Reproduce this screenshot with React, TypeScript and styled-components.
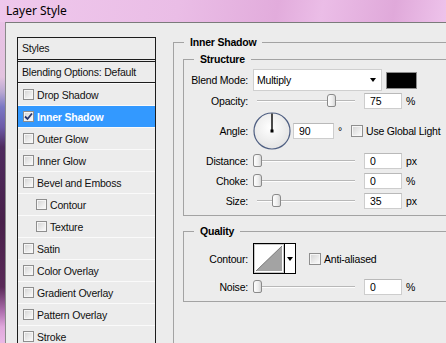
import React from 'react';
import styled, { createGlobalStyle } from 'styled-components';

const GlobalStyle = createGlobalStyle`
  html, body { margin: 0; padding: 0; background: #ececec; }
  body { font-family: "Liberation Sans", Arial, sans-serif; }
`;

const Screen = styled.div`
  width: 446px;
  height: 343px;
  overflow: hidden;
  display: flex;
  flex-direction: column;
  font-family: "Liberation Sans", Arial, sans-serif;
  font-size: 10.5px;
  letter-spacing: -0.2px;
  color: #000;
`;

const TitleBar = styled.div`
  height: 22px;
  flex: none;
  box-sizing: border-box;
  padding: 3px 0 0 6px;
  font-family: "Noto Sans", "Liberation Sans", sans-serif;
  font-size: 12px;
  letter-spacing: 0;
  line-height: 16px;
  color: #000;
  background: linear-gradient(100deg, #efc8ec 0%, #eabde6 40%, #e2acdc 62%, #ebbde7 72%, #e0a9da 88%, #eec3eb 100%);
`;

const Main = styled.div`
  flex: 1;
  display: flex;
  min-height: 0;
`;

const Desktop = styled.div`
  width: 5px;
  flex: none;
  background: linear-gradient(
    to bottom,
    #e9c2e6 0px,
    #e3c3df 55px,
    #b9a8d2 70px,
    #7a78c4 85px,
    #6c5aa8 105px,
    #4e2a5e 125px,
    #48204a 200px,
    #5a2a58 265px,
    #b070b0 290px,
    #e0a8dc 305px,
    #eab8e6 321px
  );
`;

const Window = styled.div`
  flex: 1;
  min-width: 0;
  display: flex;
  align-items: flex-start;
  background: #ececec;
  border-top: 1px solid #7b7b7b;
  border-left: 1px solid #8a8a8a;
  padding: 14px 0 0 11px;
`;

/* ---------- left list ---------- */

const StyleList = styled.div`
  width: 139px;
  flex: none;
  box-sizing: border-box;
  border: 1px solid #1c1c1c;
  border-bottom: none;
  display: flex;
  flex-direction: column;
  color: #111;
`;

const ListHeader = styled.div`
  height: 21px;
  line-height: 21px;
  padding-left: 4px;
  border-bottom: 3px double #1c1c1c;
`;

const BlendRow = styled.div`
  height: 20px;
  line-height: 20px;
  padding-left: 4px;
  border-bottom: 1px solid #1c1c1c;
`;

const Item = styled.div<{ $selected?: boolean; $indent?: boolean }>`
  height: 21px;
  display: flex;
  align-items: center;
  gap: 3px;
  padding-left: ${(p) => (p.$indent ? 18 : 5)}px;
  border-top: 1px solid #fafafa;
  background: ${(p) => (p.$selected ? '#3399ff' : 'transparent')};
  color: ${(p) => (p.$selected ? '#fff' : '#111')};
  font-weight: ${(p) => (p.$selected ? 'bold' : 'normal')};
`;

const Box = styled.span<{ $size?: number }>`
  width: ${(p) => p.$size ?? 11}px;
  height: ${(p) => p.$size ?? 11}px;
  flex: none;
  box-sizing: border-box;
  border: 1px solid #8e8e8e;
  box-shadow: inset 0 0 0 1px #f6f6f6;
  background: linear-gradient(135deg, #d2d2d2 0%, #e8e8e8 50%, #fdfdfd 100%);
  display: inline-flex;
  align-items: center;
  justify-content: center;
`;

const CheckBox = ({ checked, size }: { checked?: boolean; size?: number }) => (
  <Box $size={size}>
    {checked && (
      <svg width="9" height="9" viewBox="0 0 9 9">
        <path d="M1 4.5 L3.5 7 L8 1.5" fill="none" stroke="#26356e" strokeWidth="1.8" />
      </svg>
    )}
  </Box>
);

/* ---------- right panel ---------- */

const Group = styled.fieldset<{ $w: number; $h?: number }>`
  margin: 0;
  padding: 0;
  min-width: 0;
  width: ${(p) => p.$w}px;
  ${(p) => (p.$h ? `height: ${p.$h}px;` : '')}
  box-sizing: border-box;
  border: 1px solid #a3a3a3;
  flex: none;
`;

const OuterGroup = styled(Group)`
  margin: -1px 0 0 17px;
`;

const Legend = styled.legend`
  margin-left: 10px;
  padding: 0 6px;
  font-weight: bold;
  line-height: 12px;
  height: 12px;
  color: #000;
`;

const OuterBody = styled.div`
  padding: 5px 0 0 9px;
  display: flex;
  flex-direction: column;
`;

const GroupBody = styled.div<{ $top: number; $bottom: number }>`
  padding: ${(p) => p.$top}px 0 ${(p) => p.$bottom}px 0;
  display: flex;
  flex-direction: column;
`;

const QualityGroup = styled(Group)`
  margin-top: 9px;
`;

const Row = styled.div<{ $h: number; $gap?: number }>`
  height: ${(p) => p.$h}px;
  margin-top: ${(p) => p.$gap ?? 0}px;
  display: flex;
  align-items: center;
  white-space: nowrap;
`;

const Label = styled.span`
  width: 64px;
  flex: none;
  text-align: right;
  margin-right: 5px;
`;

const Select = styled.div`
  width: 129px;
  height: 22px;
  flex: none;
  box-sizing: border-box;
  background: #fff;
  border: 1px solid #cfcfcf;
  display: flex;
  align-items: center;
  justify-content: space-between;
  padding: 0 5px 0 3px;
`;

const Arrow = styled.span`
  width: 0;
  height: 0;
  border-left: 3.5px solid transparent;
  border-right: 3.5px solid transparent;
  border-top: 4px solid #000;
`;

const Swatch = styled.div`
  width: 31px;
  height: 17px;
  flex: none;
  margin-left: 4px;
  box-sizing: border-box;
  border: 1px solid #8c8c8c;
  background: #000;
`;

const SliderWrap = styled.div`
  position: relative;
  width: 102px;
  height: 14px;
  flex: none;
`;

const Track = styled.div`
  position: absolute;
  left: 4px;
  right: 0;
  top: 6px;
  height: 1px;
  background: #b8b8b8;
  border-bottom: 1px solid #fdfdfd;
`;

const Thumb = styled.div`
  position: absolute;
  top: 0;
  width: 9px;
  height: 13px;
  box-sizing: border-box;
  border: 1px solid #8a8a8a;
  border-radius: 3px 3px 2px 2px;
  background: linear-gradient(to right, #fdfdfd 0%, #eeeeee 60%, #d6d6d6 100%);
`;

const Slider = ({ at }: { at: number }) => (
  <SliderWrap>
    <Track />
    <Thumb style={{ left: 4 + at - 4 }} />
  </SliderWrap>
);

const NumBox = styled.div<{ $w?: number; $ml?: number }>`
  width: ${(p) => p.$w ?? 38}px;
  height: 16px;
  flex: none;
  margin-left: ${(p) => p.$ml ?? 9}px;
  box-sizing: border-box;
  background: #fff;
  border: 1px solid #cdcdcd;
  border-top-color: #b9b9b9;
  padding-left: 5px;
  line-height: 14px;
  color: #000;
`;

const Unit = styled.span`
  margin-left: 4px;
`;

const DialSvg = styled.svg`
  flex: none;
`;

const Dial = () => (
  <DialSvg width="38" height="38" viewBox="0 0 38 38">
    <defs>
      <radialGradient id="dialFill" cx="45%" cy="40%" r="60%">
        <stop offset="0%" stopColor="#ffffff" />
        <stop offset="100%" stopColor="#e4e4e4" />
      </radialGradient>
    </defs>
    <circle cx="19" cy="19" r="18" fill="url(#dialFill)" stroke="#4f5f82" strokeWidth="1.2" />
    <line x1="19" y1="19" x2="19" y2="1.5" stroke="#000" strokeWidth="1.4" />
    <rect x="17.5" y="17.5" width="3" height="3" fill="#000" />
  </DialSvg>
);

const CheckLabel = styled.span<{ $ml: number }>`
  display: inline-flex;
  align-items: center;
  gap: 3px;
  margin-left: ${(p) => p.$ml}px;
`;

const ContourPick = styled.div`
  width: 43px;
  height: 31px;
  flex: none;
  box-sizing: border-box;
  border: 1px solid #000;
  background: #fff;
  display: flex;
`;

const ContourArrow = styled.div`
  flex: 1;
  border-left: 1px solid #000;
  display: flex;
  align-items: center;
  justify-content: center;
`;

const ContourPreview = () => (
  <svg width="30" height="29" viewBox="0 0 30 29">
    <rect x="0.5" y="0.5" width="29" height="28" fill="#fff" stroke="#c8c8c8" />
    <polygon points="2,27 28,2 28,27" fill="#a3a3a3" />
    <line x1="2" y1="27" x2="28" y2="2" stroke="#7a7a7a" strokeWidth="1" />
  </svg>
);

const items: { name: string; checked?: boolean; selected?: boolean; indent?: boolean }[] = [
  { name: 'Drop Shadow' },
  { name: 'Inner Shadow', checked: true, selected: true },
  { name: 'Outer Glow' },
  { name: 'Inner Glow' },
  { name: 'Bevel and Emboss' },
  { name: 'Contour', indent: true },
  { name: 'Texture', indent: true },
  { name: 'Satin' },
  { name: 'Color Overlay' },
  { name: 'Gradient Overlay' },
  { name: 'Pattern Overlay' },
  { name: 'Stroke' },
];

export default function App() {
  return (
    <>
      <GlobalStyle />
      <Screen>
        <TitleBar>Layer Style</TitleBar>
        <Main>
          <Desktop />
          <Window>
            <StyleList>
              <ListHeader>Styles</ListHeader>
              <BlendRow>Blending Options: Default</BlendRow>
              {items.map((it) => (
                <Item key={it.name} $selected={it.selected} $indent={it.indent}>
                  <CheckBox checked={it.checked} />
                  {it.name}
                </Item>
              ))}
            </StyleList>

            <OuterGroup $w={300} $h={330}>
              <Legend>Inner Shadow</Legend>
              <OuterBody>
                <Group $w={290}>
                  <Legend>Structure</Legend>
                  <GroupBody $top={4} $bottom={4}>
                    <Row $h={22}>
                      <Label>Blend Mode:</Label>
                      <Select>
                        Multiply
                        <Arrow />
                      </Select>
                      <Swatch />
                    </Row>
                    <Row $h={20}>
                      <Label>Opacity:</Label>
                      <Slider at={74} />
                      <NumBox>75</NumBox>
                      <Unit>%</Unit>
                    </Row>
                    <Row $h={40}>
                      <Label>Angle:</Label>
                      <Dial />
                      <NumBox $w={41} $ml={2}>90</NumBox>
                      <Unit>°</Unit>
                      <CheckLabel $ml={9}>
                        <CheckBox size={12} />
                        Use Global Light
                      </CheckLabel>
                    </Row>
                    <Row $h={20}>
                      <Label>Distance:</Label>
                      <Slider at={0} />
                      <NumBox>0</NumBox>
                      <Unit>px</Unit>
                    </Row>
                    <Row $h={20}>
                      <Label>Choke:</Label>
                      <Slider at={0} />
                      <NumBox>0</NumBox>
                      <Unit>%</Unit>
                    </Row>
                    <Row $h={20}>
                      <Label>Size:</Label>
                      <Slider at={19} />
                      <NumBox>35</NumBox>
                      <Unit>px</Unit>
                    </Row>
                  </GroupBody>
                </Group>

                <QualityGroup $w={290}>
                  <Legend>Quality</Legend>
                  <GroupBody $top={6} $bottom={4}>
                    <Row $h={31}>
                      <Label>Contour:</Label>
                      <ContourPick>
                        <ContourPreview />
                        <ContourArrow>
                          <Arrow />
                        </ContourArrow>
                      </ContourPick>
                      <CheckLabel $ml={13}>
                        <CheckBox size={12} />
                        Anti-aliased
                      </CheckLabel>
                    </Row>
                    <Row $h={20} $gap={3}>
                      <Label>Noise:</Label>
                      <Slider at={0} />
                      <NumBox>0</NumBox>
                      <Unit>%</Unit>
                    </Row>
                  </GroupBody>
                </QualityGroup>
              </OuterBody>
            </OuterGroup>
          </Window>
        </Main>
      </Screen>
    </>
  );
}
